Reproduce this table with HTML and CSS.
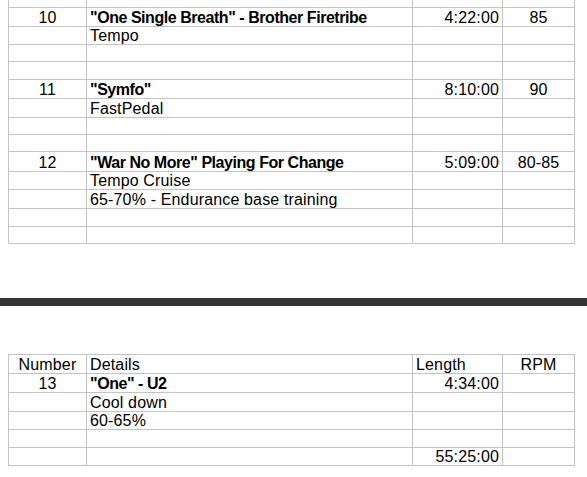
FILE: index.html
```html
<!DOCTYPE html>
<html>
<head>
<meta charset="utf-8">
<link rel="stylesheet" href="styles.css">
</head>
<body>
<table class="sheet top-sheet">
  <colgroup><col class="c-num"><col class="c-det"><col class="c-len"><col class="c-rpm"></colgroup>
  <tr class="r-cut"><td></td><td></td><td></td><td></td></tr>
  <tr class="r19"><td class="num">10</td><td class="title">"One Single Breath" - Brother Firetribe</td><td class="len">4:22:00</td><td class="rpm">85</td></tr>
  <tr class="r18"><td></td><td>Tempo</td><td></td><td></td></tr>
  <tr class="r17"><td></td><td></td><td></td><td></td></tr>
  <tr class="r18"><td></td><td></td><td></td><td></td></tr>
  <tr class="r19"><td class="num">11</td><td class="title">"Symfo"</td><td class="len">8:10:00</td><td class="rpm">90</td></tr>
  <tr class="r19"><td></td><td>FastPedal</td><td></td><td></td></tr>
  <tr class="r17"><td></td><td></td><td></td><td></td></tr>
  <tr class="r17"><td></td><td></td><td></td><td></td></tr>
  <tr class="r20"><td class="num">12</td><td class="title">"War No More" Playing For Change</td><td class="len">5:09:00</td><td class="rpm">80-85</td></tr>
  <tr class="r18"><td></td><td>Tempo Cruise</td><td></td><td></td></tr>
  <tr class="r19"><td></td><td>65-70% - Endurance base training</td><td></td><td></td></tr>
  <tr class="r18"><td></td><td></td><td></td><td></td></tr>
  <tr class="r17"><td></td><td></td><td></td><td></td></tr>
</table>

<div class="divider"></div>

<table class="sheet bottom-sheet">
  <colgroup><col class="c-num"><col class="c-det"><col class="c-len"><col class="c-rpm"></colgroup>
  <tr class="r19"><td class="num">Number</td><td>Details</td><td>Length</td><td class="rpm">RPM</td></tr>
  <tr class="r19"><td class="num">13</td><td class="title">"One" - U2</td><td class="len">4:34:00</td><td class="rpm"></td></tr>
  <tr class="r19"><td></td><td>Cool down</td><td></td><td></td></tr>
  <tr class="r18"><td></td><td>60-65%</td><td></td><td></td></tr>
  <tr class="r18"><td></td><td></td><td></td><td></td></tr>
  <tr class="r18"><td></td><td></td><td class="len">55:25:00</td><td></td></tr>
</table>
</body>
</html>
```

FILE: styles.css
```css
html, body {
  margin: 0;
  padding: 0;
  background: #ffffff;
}

body {
  font-family: "Liberation Sans", Arial, sans-serif;
  font-size: 16px;
  color: #000000;
}

.sheet {
  border-collapse: collapse;
  table-layout: fixed;
  margin-left: 8px;
  width: 566px;
}

.c-num { width: 78px; }
.c-det { width: 326px; }
.c-len { width: 90px; }
.c-rpm { width: 72px; }

.sheet td {
  border: 1px solid #c4c4c4;
  padding: 0 3px;
  line-height: 17px;
  vertical-align: bottom;
  white-space: nowrap;
  overflow: hidden;
  letter-spacing: 0.15px;
}

.top-sheet .r-cut td {
  border-top: none;
  height: 7px;
}

.r17 td { height: 16px; }
.r18 td { height: 17px; }
.r19 td { height: 18px; }
.r20 td { height: 19px; }

.num { text-align: center; }
.rpm { text-align: center; }
.len { text-align: right; }
.sheet td.title { font-weight: bold; letter-spacing: -0.45px; }

.divider {
  height: 8px;
  background: #333333;
  margin-top: 54px;
  margin-bottom: 48px;
}
```
